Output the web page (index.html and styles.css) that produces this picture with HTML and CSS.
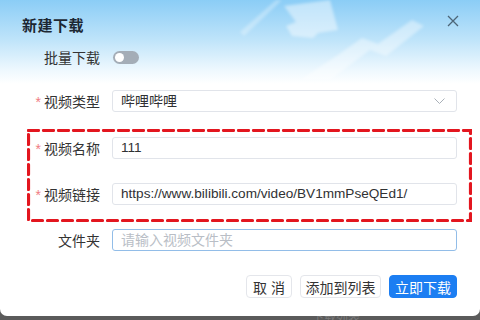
FILE: index.html
```html
<!DOCTYPE html>
<html lang="zh-CN">
<head>
    <meta charset="UTF-8">
    <title>新建下载</title>
    <link rel="stylesheet" href="styles.css">
</head>
<body>
    <div class="dialog">
        <svg class="deco" width="480" height="90" viewBox="0 0 480 90">
            <polygon points="240,32 276,0 282,0 244,36" fill="#ffffff" opacity="0.3"/>
            <polygon points="284,6 330,0 338,30 318,33 313,38 292,36 286,26 296,22" fill="#ffffff" opacity="0.45"/>
            <polygon points="300,80 338,55 362,38 378,44 412,20 424,26 386,56 370,50 330,80" fill="#ffffff" opacity="0.4"/>
        </svg>

        <div class="header">
            <span class="title">新建下载</span>
            <svg class="close" width="12" height="12" viewBox="0 0 12 12">
                <path d="M1 1 L11 11 M11 1 L1 11" stroke="#4d6577" stroke-width="1.3" fill="none"/>
            </svg>
        </div>

        <div class="form">
            <div class="row row-switch">
                <label class="label">批量下载</label>
                <span class="switch"><span class="knob"></span></span>
            </div>

            <div class="row row-type">
                <label class="label"><span class="req">*</span>视频类型</label>
                <div class="select">
                    <span>哔哩哔哩</span>
                    <svg width="11" height="6" viewBox="0 0 11 6">
                        <path d="M0.5 0.5 L5.5 5.5 L10.5 0.5" stroke="#a9b0b8" stroke-width="1" fill="none"/>
                    </svg>
                </div>
            </div>

            <div class="group">
                <svg class="marker" width="445" height="93" viewBox="0 0 445 93">
                    <rect x="1.5" y="1.5" width="442" height="90" fill="none" stroke="#e3161f" stroke-width="3.2" stroke-dasharray="10 5" stroke-linecap="round"/>
                </svg>
                <div class="row">
                    <label class="label"><span class="req">*</span>视频名称</label>
                    <div class="input">111</div>
                </div>
                <div class="row row-link">
                    <label class="label"><span class="req">*</span>视频链接</label>
                    <div class="input">https://www.bilibili.com/video/BV1mmPseQEd1/</div>
                </div>
            </div>

            <div class="row row-folder">
                <label class="label">文件夹</label>
                <div class="input focused placeholder">请输入视频文件夹</div>
            </div>
        </div>

        <div class="footer">
            <button class="btn btn-cancel">取 消</button>
            <button class="btn btn-add">添加到列表</button>
            <button class="btn btn-primary">立即下载</button>
        </div>
    </div>
    <div class="under">下载列表</div>
</body>
</html>
```

FILE: styles.css
```css
body {
    margin: 0;
    width: 480px;
    height: 320px;
    overflow: hidden;
    background-color: #5b5b5b;
    font-family: "Liberation Sans", "Noto Sans CJK SC", sans-serif;
    font-size: 14px;
    color: #303133;
}
.dialog {
    position: relative;
    width: 480px;
    height: 316px;
    border-radius: 0 0 7px 7px;
    background: linear-gradient(180deg, #8bcdf6 0px, #bfe4fa 40px, #eef8fe 70px, #ffffff 84px);
    overflow: hidden;
}
.deco {
    position: absolute;
    left: 0;
    top: 0;
    filter: blur(1.5px);
}
.header {
    position: relative;
    display: flex;
    justify-content: space-between;
    align-items: center;
    height: 24px;
    padding: 12px 21px 0 22px;
}
.title {
    font-size: 15px;
    font-weight: bold;
    color: #1c2733;
    letter-spacing: 0.5px;
}
.close {
    margin-top: -6px;
}
.form {
    position: relative;
    margin-top: 10px;
}
.row {
    display: flex;
    align-items: center;
    height: 22px;
    padding-right: 23px;
}
.label {
    width: 100px;
    text-align: right;
    margin-right: 12px;
    color: #333;
    flex-shrink: 0;
}
.req {
    color: #f07c82;
    margin-right: 3px;
}
.switch {
    position: relative;
    width: 26px;
    height: 13px;
    margin-left: 1px;
    border-radius: 7px;
    background-color: #a4adb7;
}
.knob {
    position: absolute;
    left: 2px;
    top: 2px;
    width: 9px;
    height: 9px;
    border-radius: 50%;
    background-color: #fff;
}
.row-type {
    margin-top: 22px;
}
.select,
.input {
    flex: 1;
    height: 20px;
    line-height: 20px;
    border: 1px solid #e1e4ea;
    border-radius: 3px;
    background-color: #fff;
    padding: 0 8px;
    white-space: nowrap;
    overflow: hidden;
}
.input {
    font-size: 13.6px;
}
.select {
    display: flex;
    justify-content: space-between;
    align-items: center;
    padding-right: 11px;
}
.group {
    position: relative;
    margin-top: 25px;
}
.marker {
    position: absolute;
    left: 27px;
    top: -8px;
}
.row-link {
    margin-top: 24px;
}
.row-folder {
    margin-top: 24px;
}
.focused {
    border-color: #92bde8;
}
.placeholder {
    font-size: 14px;
    color: #b9bec6;
}
.footer {
    display: flex;
    justify-content: flex-end;
    gap: 8px;
    margin-top: 24px;
    padding-right: 23px;
}
.btn {
    height: 23px;
    padding: 0;
    border: 1px solid #e4e6eb;
    border-radius: 4px;
    background-color: #fff;
    font-family: "Liberation Sans", "Noto Sans CJK SC", sans-serif;
    font-size: 14px;
    color: #333;
}
.btn-cancel {
    width: 46px;
}
.btn-add {
    width: 81px;
}
.btn-primary {
    width: 68px;
    border-color: #1c7ef2;
    background-color: #1c7ef2;
    color: #fff;
}
.under {
    height: 4px;
    padding-left: 312px;
    font-size: 12px;
    line-height: 4px;
    color: #7a7a7a;
    overflow: hidden;
}
```
